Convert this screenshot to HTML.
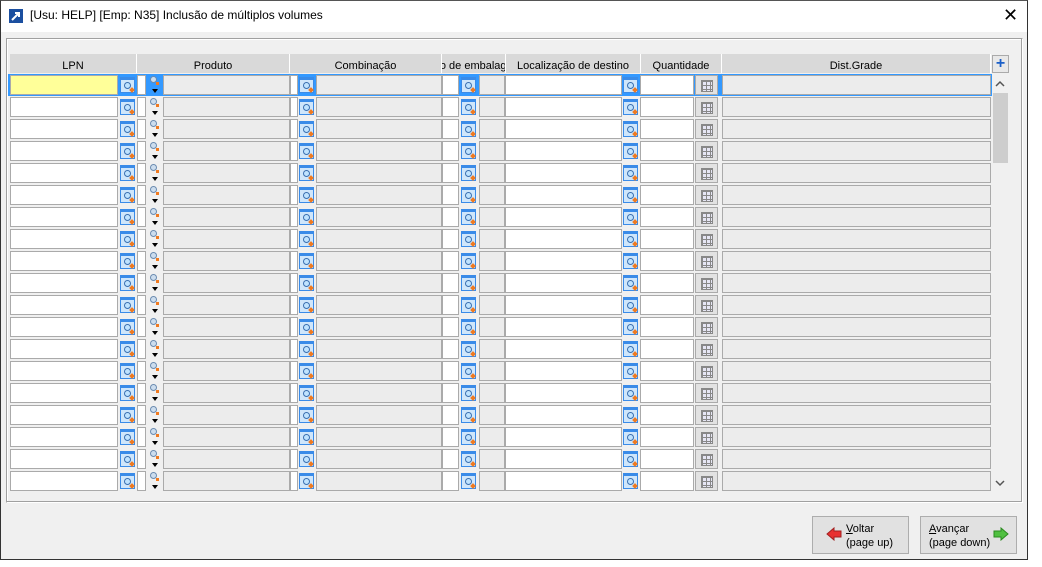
<!DOCTYPE html>
<html><head><meta charset="utf-8"><style>
*{box-sizing:border-box;margin:0;padding:0}
body{width:1042px;height:567px;background:#fff;font-family:"Liberation Sans","DejaVu Sans",sans-serif;font-size:11px;position:relative;overflow:hidden}
.a{position:absolute}
#win{left:0;top:0;width:1028px;height:560px;border:1px solid #333;border-top-color:#555;background:#f0f0f0}
#title{left:0;top:0;width:1026px;height:31px;background:#fff}
#panel{left:6px;top:38px;width:1017px;height:465px;border:1px solid #a0a0a0;border-right-color:#fff;border-bottom-color:#fff;box-shadow:inset -1px -1px 0 #a0a0a0, inset 1px 1px 0 #fff}
.h{top:54px;height:19px;background:#d9d9d9;border-right:1px solid #fff;text-align:center;line-height:24px;font-size:11px;color:#000;overflow:hidden;white-space:nowrap}
.in{background:#fff;border:1px solid #aaa;height:20px}
.gr{background:#ececec;border:1px solid #aaa;height:20px}
.sb{width:15px;height:16px;border:1px solid #3a8be8;background:#cfe6fb;border-top:3px solid #3a8be8}
.sb i{position:absolute;left:3px;top:2px;width:7px;height:7px;border:1.5px solid #3a6fb0;border-radius:50%;background:#bfe3ff}
.sb b{position:absolute;left:9px;top:8px;width:4px;height:4px;background:#f07a20;transform:rotate(45deg)}
.pi i{position:absolute;left:2px;top:0;width:7px;height:7px;border:1.5px solid #6a8bb0;border-radius:50%;background:#cde}
.pi b{position:absolute;left:8px;top:6px;width:3px;height:3px;background:#f07a20}
.pi u{position:absolute;left:4px;top:13px;border-left:3px solid transparent;border-right:3px solid transparent;border-top:4px solid #000}
.gb{width:23px;height:20px;border:1px solid #aaa;background:#e2e2e2}
.gb i{position:absolute;left:5px;top:4px;width:12px;height:12px;border:1px solid #888;background-image:linear-gradient(#888 1px,transparent 1px),linear-gradient(90deg,#888 1px,transparent 1px);background-size:4px 4px;background-color:#e6e6f4}
.btn{top:516px;height:38px;width:97px;border:1px solid #adadad;background:#e1e1e1;font-size:11px;line-height:14px;color:#000}
</style></head><body>
<div id="win" class="a"></div>
<div id="title" class="a" style="left:1px;top:1px"></div>
<div class="a" style="left:9px;top:9px;width:14px;height:14px;background:#1b4fa0"><svg width="14" height="14"><path d="M3 11L10 4M6 4h4v4" stroke="#fff" stroke-width="2" fill="none"/></svg></div>
<div class="a" style="left:30px;top:8px;font-size:12px;color:#000">[Usu: HELP] [Emp: N35] Inclusão de múltiplos volumes</div>
<div class="a" style="left:1003px;top:5px;font-size:18px;font-weight:300;color:#000">✕</div>
<div id="panel" class="a"></div>
<div class="a h" style="left:10px;width:127px">LPN</div>
<div class="a h" style="left:137px;width:153px">Produto</div>
<div class="a h" style="left:290px;width:152px">Combinação</div>
<div class="a h" style="left:442px;width:64px"><span class="a" style="left:-17px;top:0">Tipo de embalagem</span></div>
<div class="a h" style="left:506px;width:135px">Localização de destino</div>
<div class="a h" style="left:641px;width:81px">Quantidade</div>
<div class="a h" style="left:722px;width:269px">Dist.Grade</div>
<div class="a" style="left:992px;top:55px;width:17px;height:18px;border:1px solid #aaa;background:#e8e8e8;color:#1a5fc8;font-weight:bold;font-size:16px;line-height:15px;text-align:center">+</div>
<div class="a" style="left:992px;top:74px;width:17px;height:418px;background:#f0f0f0"></div>
<div class="a" style="left:993px;top:93px;width:15px;height:70px;background:#cdcdcd"></div>
<svg class="a" style="left:995px;top:80px" width="10" height="8"><path d="M1 6L5 2L9 6" stroke="#555" stroke-width="1.5" fill="none"/></svg>
<svg class="a" style="left:995px;top:479px" width="10" height="8"><path d="M1 2L5 6L9 2" stroke="#555" stroke-width="1.5" fill="none"/></svg>
<div class="a" style="left:8px;top:74px;width:984px;height:22px;background:#3399ff"></div>
<div id="rows"></div>
<div class="a btn" style="left:812px"><svg class="a" style="left:13px;top:10px" width="16" height="14"><path d="M1 7L8 1v3h7v6H8v3z" fill="#e83030" stroke="#a02020"/></svg><div class="a" style="left:33px;top:5px"><u>V</u>oltar<br>(page up)</div></div>
<div class="a btn" style="left:920px"><div class="a" style="left:8px;top:5px"><u>A</u>vançar<br>(page down)</div><svg class="a" style="left:72px;top:10px" width="16" height="14"><path d="M15 7L8 1v3H1v6h7v3z" fill="#50c040" stroke="#2a8a20"/></svg></div>
<script>
var h='';
for(var r=0;r<19;r++){var y=75+r*22;var t=y,s=y+2;
var yel=r==0?'background:#ffff99;':'';
h+='<div class="a in" style="left:10px;top:'+t+'px;width:108px;'+yel+'"></div>';
h+='<div class="a sb" style="left:120px;top:'+s+'px"><i></i><b></b></div>';
h+='<div class="a in" style="left:137px;top:'+t+'px;width:9px"></div>';
h+='<div class="a pi" style="left:148px;top:'+(y+1)+'px;width:12px;height:18px"><i></i><b></b><u></u></div>';
h+='<div class="a gr" style="left:163px;top:'+t+'px;width:127px"></div>';
h+='<div class="a in" style="left:290px;top:'+t+'px;width:8px"></div>';
h+='<div class="a sb" style="left:299px;top:'+s+'px"><i></i><b></b></div>';
h+='<div class="a gr" style="left:316px;top:'+t+'px;width:126px"></div>';
h+='<div class="a in" style="left:442px;top:'+t+'px;width:17px"></div>';
h+='<div class="a sb" style="left:461px;top:'+s+'px"><i></i><b></b></div>';
h+='<div class="a gr" style="left:479px;top:'+t+'px;width:26px"></div>';
h+='<div class="a in" style="left:505px;top:'+t+'px;width:117px"></div>';
h+='<div class="a sb" style="left:623px;top:'+s+'px"><i></i><b></b></div>';
h+='<div class="a in" style="left:640px;top:'+t+'px;width:54px"></div>';
h+='<div class="a gb" style="left:695px;top:'+t+'px"><i></i></div>';
h+='<div class="a gr" style="left:722px;top:'+t+'px;width:269px"></div>';
}
document.getElementById('rows').innerHTML=h;
</script>
</body></html>
